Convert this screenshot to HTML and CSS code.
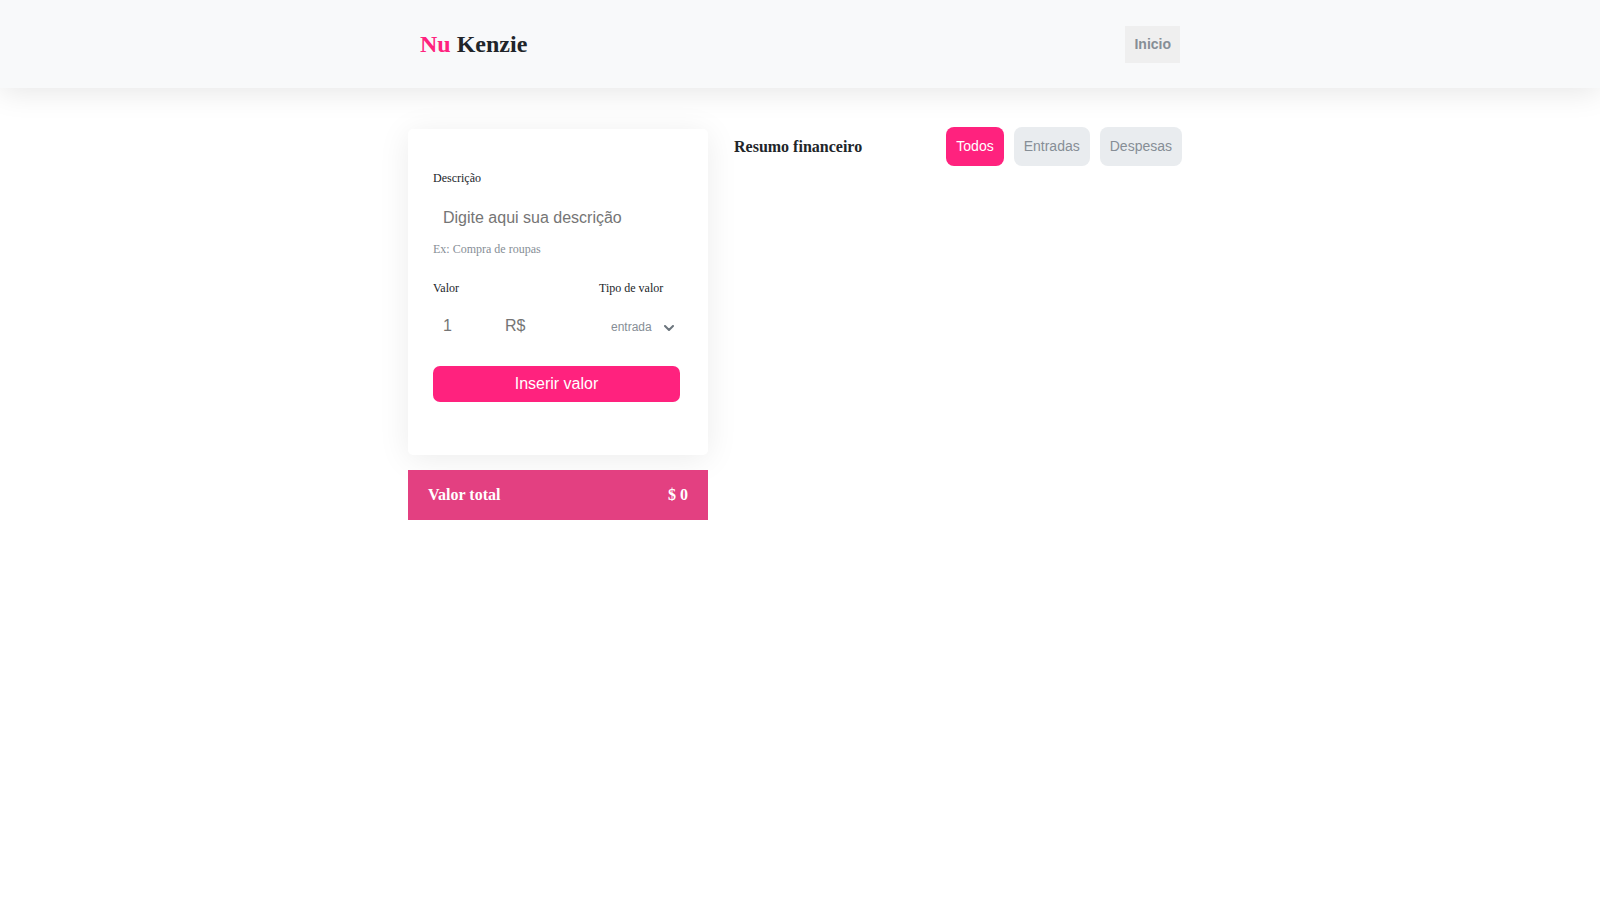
FILE: index.html
```html
<!DOCTYPE html>
<html lang="pt-BR">
<head>
<meta charset="utf-8">
<title>Nu Kenzie</title>
<link rel="stylesheet" href="styles.css">
</head>
<body>
<header class="topbar">
  <div class="topbar-inner">
    <h1 class="logo"><span class="logo-nu">Nu</span> Kenzie</h1>
    <button class="btn-home" type="button">Inicio</button>
  </div>
</header>
<main class="main">
  <section class="left">
    <form class="card">
      <label class="label" for="desc">Descrição</label>
      <input class="input input-desc" id="desc" type="text" placeholder="Digite aqui sua descrição">
      <p class="hint">Ex: Compra de roupas</p>
      <div class="row">
        <div class="col col-valor">
          <label class="label" for="valor">Valor</label>
          <div class="valor-field">
            <input class="input input-valor" id="valor" type="number" placeholder="1">
            <span class="currency">R$</span>
          </div>
        </div>
        <div class="col col-tipo">
          <label class="label" for="tipo">Tipo de valor</label>
          <div class="select-field">
            <select class="select" id="tipo">
              <option>entrada</option>
              <option>despesa</option>
            </select>
            <svg class="chevron" width="10" height="6" viewBox="0 0 10 6"><polyline points="1,1 5,5 9,1" fill="none" stroke="#6c757d" stroke-width="2" stroke-linecap="round" stroke-linejoin="round"/></svg>
          </div>
        </div>
      </div>
      <button class="btn-submit" type="button">Inserir valor</button>
    </form>
    <div class="total">
      <span>Valor total</span>
      <span>$ 0</span>
    </div>
  </section>
  <section class="right">
    <div class="summary-head">
      <h2 class="summary-title">Resumo financeiro</h2>
      <div class="filters">
        <button class="filter filter-active" type="button">Todos</button>
        <button class="filter" type="button">Entradas</button>
        <button class="filter" type="button">Despesas</button>
      </div>
    </div>
  </section>
</main>
</body>
</html>
```

FILE: styles.css
```css
* {
  box-sizing: border-box;
}

body {
  margin: 0;
  background: #ffffff;
  font-family: "Liberation Serif", "Times New Roman", serif;
  color: #212529;
}

.topbar {
  height: 88px;
  background: #f8f9fa;
  box-shadow: 0 4px 30px rgba(0, 0, 0, 0.1);
}

.topbar-inner {
  width: 760px;
  height: 100%;
  margin: 0 auto;
  display: flex;
  align-items: center;
  justify-content: space-between;
}

.logo {
  margin: 0;
  font-size: 24px;
  font-weight: 700;
  color: #212529;
  line-height: 28px;
}

.logo-nu {
  color: #ff227e;
}

.btn-home {
  border: none;
  background: #efefef;
  color: #868e96;
  font-family: "Liberation Sans", Arial, sans-serif;
  font-weight: 700;
  font-size: 14px;
  line-height: 17px;
  padding: 10px 9px;
  border-radius: 0;
}

.main {
  width: 774px;
  margin: 39px auto 0;
  padding-right: 10px;
  box-sizing: content-box;
  display: flex;
  align-items: flex-start;
  gap: 26px;
}

.left {
  width: 300px;
  flex: none;
  margin-top: 2px;
}

.card {
  background: #ffffff;
  border-radius: 5px;
  box-shadow: 0 4px 32px rgba(0, 0, 0, 0.08);
  padding: 42px 28px 53px 25px;
  display: flex;
  flex-direction: column;
}

.label {
  display: block;
  font-size: 12px;
  line-height: 14px;
  color: #212529;
}

.input {
  border: none;
  outline: none;
  background: transparent;
  height: 36px;
  padding: 0 10px;
  font-family: "Liberation Sans", Arial, sans-serif;
  font-size: 16px;
  color: #212529;
}

.input::placeholder {
  color: #757575;
}

.input-desc {
  margin-top: 15px;
  width: 100%;
}

.hint {
  margin: 6px 0 0;
  font-size: 12px;
  line-height: 14px;
  color: #868e96;
}

.row {
  display: flex;
  margin-top: 25px;
}

.col-valor {
  width: 166px;
}

.col-tipo {
  flex: 1;
}

.valor-field {
  margin-top: 13px;
  display: flex;
  align-items: center;
  height: 36px;
}

.input-valor {
  width: 72px;
  -moz-appearance: textfield;
}

.input-valor::-webkit-outer-spin-button,
.input-valor::-webkit-inner-spin-button {
  -webkit-appearance: none;
  margin: 0;
}

.currency {
  font-family: "Liberation Sans", Arial, sans-serif;
  font-size: 16px;
  color: #757575;
}

.select-field {
  margin-top: 13px;
  height: 36px;
  display: flex;
  align-items: center;
  padding-top: 2px;
}

.select {
  -webkit-appearance: none;
  appearance: none;
  border: none;
  outline: none;
  background: transparent;
  padding: 0 0 0 12px;
  width: 65px;
  font-family: "Liberation Sans", Arial, sans-serif;
  font-size: 12px;
  color: #868e96;
}

.chevron {
  display: block;
  margin-top: 1px;
}

.btn-submit {
  margin-top: 22px;
  height: 36px;
  width: 247px;
  border: none;
  border-radius: 7px;
  background: #ff227e;
  color: #ffffff;
  font-family: "Liberation Sans", Arial, sans-serif;
  font-size: 16px;
}

.total {
  margin-top: 15px;
  height: 50px;
  background: #e34081;
  color: #ffffff;
  display: flex;
  align-items: center;
  justify-content: space-between;
  padding: 0 20px;
  font-weight: 700;
  font-size: 16px;
}

.right {
  flex: 1;
}

.summary-head {
  display: flex;
  align-items: center;
  justify-content: space-between;
}

.summary-title {
  margin: 0;
  font-size: 16px;
  font-weight: 700;
  color: #212529;
}

.filters {
  display: flex;
  gap: 10px;
}

.filter {
  border: none;
  border-radius: 8px;
  background: #e9ecef;
  color: #868e96;
  font-family: "Liberation Sans", Arial, sans-serif;
  font-size: 14px;
  line-height: 17px;
  padding: 11px 10px;
}

.filter-active {
  background: #ff227e;
  color: #ffffff;
}
```
